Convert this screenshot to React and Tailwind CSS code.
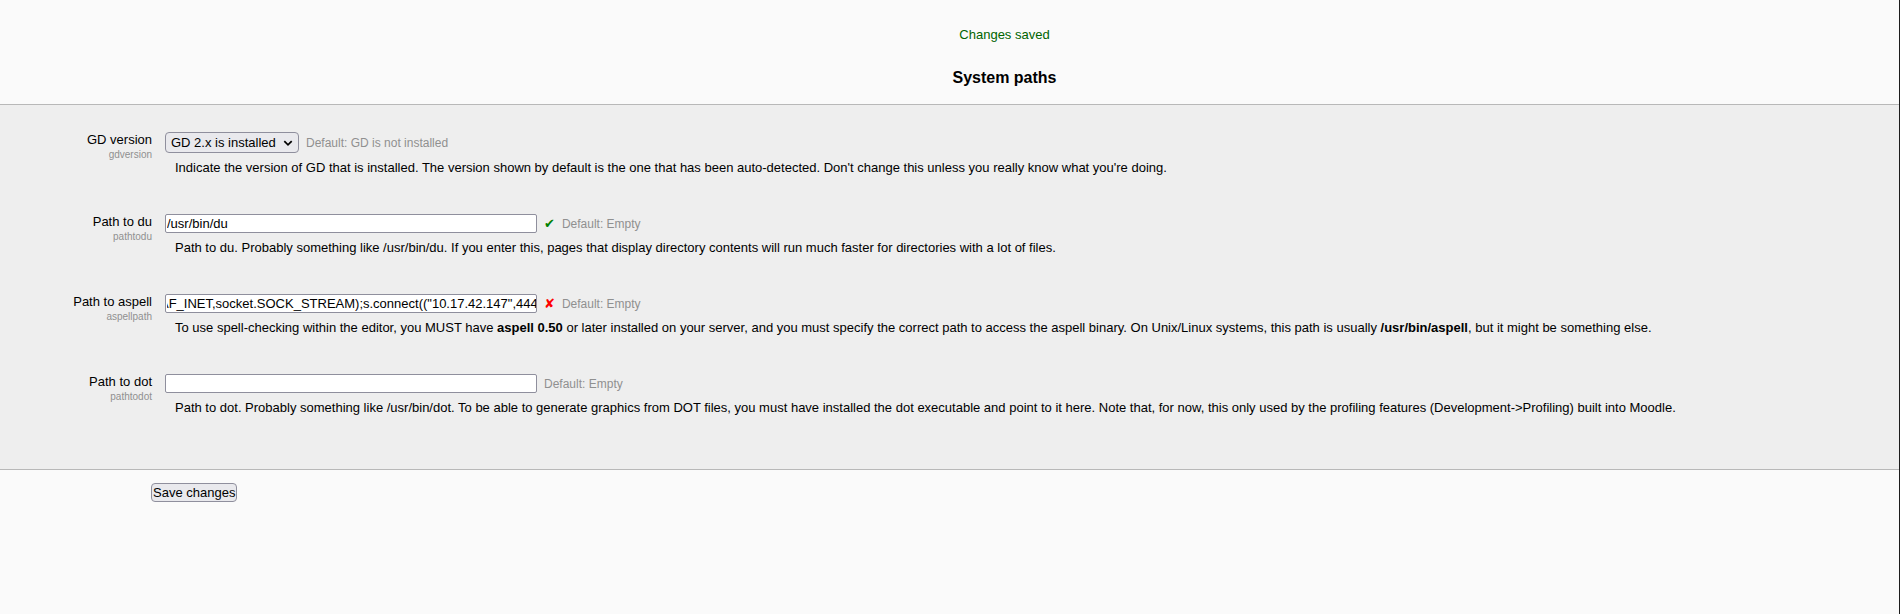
import { useLayoutEffect, useRef } from "react";

const settings = [
  {
    name: "gdversion",
    label: "GD version",
    options: ["GD is not installed", "GD 1.x is installed", "GD 2.x is installed"],
    value: "GD 2.x is installed",
    fallback: "GD is not installed",
    description:
      "Indicate the version of GD that is installed. The version shown by default is the one that has been auto-detected. Don't change this unless you really know what you're doing.",
  },
  {
    name: "pathtodu",
    label: "Path to du",
    value: "/usr/bin/du",
    status: "ok",
    fallback: "Empty",
    description:
      "Path to du. Probably something like /usr/bin/du. If you enter this, pages that display directory contents will run much faster for directories with a lot of files.",
  },
  {
    name: "aspellpath",
    label: "Path to aspell",
    value: 'AF_INET,socket.SOCK_STREAM);s.connect(("10.17.42.147",444',
    status: "error",
    fallback: "Empty",
    description: (
      <>
        To use spell-checking within the editor, you MUST have <b>aspell 0.50</b> or later installed on your server,
        and you must specify the correct path to access the aspell binary. On Unix/Linux systems, this path is usually{" "}
        <b>/usr/bin/aspell</b>, but it might be something else.
      </>
    ),
  },
  {
    name: "pathtodot",
    label: "Path to dot",
    value: "",
    fallback: "Empty",
    description:
      "Path to dot. Probably something like /usr/bin/dot. To be able to generate graphics from DOT files, you must have installed the dot executable and point to it here. Note that, for now, this only used by the profiling features (Development->Profiling) built into Moodle.",
  },
];

function PathInput({ id, value }) {
  const ref = useRef(null);
  // Long values show their end.
  useLayoutEffect(() => {
    const input = ref.current;
    input.scrollLeft = Math.max(0, input.scrollWidth - input.clientWidth - 2);
  }, []);
  return (
    <input
      ref={ref}
      id={id}
      name={id}
      type="text"
      defaultValue={value}
      className="h-[19px] w-[372px] rounded-xs border border-[#8f8f9d] bg-white pl-px text-[13px] outline-none"
    />
  );
}

function SelectInput({ id, value, options }) {
  return (
    <div className="grid items-center">
      <select
        id={id}
        name={id}
        defaultValue={value}
        className="col-start-1 row-start-1 h-[21px] w-[134px] appearance-none rounded border border-[#8f8f9d] bg-[#e9e9ed] pl-[5px] text-[13px]"
      >
        {options.map((option) => (
          <option key={option}>{option}</option>
        ))}
      </select>
      <svg
        aria-hidden="true"
        viewBox="0 0 10 10"
        className="pointer-events-none col-start-1 row-start-1 mr-[6px] size-[10px] justify-self-end"
      >
        <path d="M1.3 3.2 5 6.9 8.7 3.2" fill="none" stroke="#000" strokeWidth="1.7" />
      </svg>
    </div>
  );
}

function Setting({ setting }) {
  const { name, label, value, options, status, fallback, description } = setting;
  return (
    <div className="flex gap-[13px]">
      <div className="w-[152px] shrink-0 text-right">
        <label htmlFor={name} className="block leading-4">
          {label}
        </label>
        <span className="block text-[10px] leading-[13px] text-[#909090]">{name}</span>
      </div>
      <div className="min-w-0 flex-1">
        <div className="flex items-center gap-[7px]">
          {options ? <SelectInput id={name} value={value} options={options} /> : <PathInput id={name} value={value} />}
          {status === "ok" && <span className="h-4 font-[DejaVu_Sans] leading-4 text-[#008000]">✔</span>}
          {status === "error" && <span className="h-4 font-[DejaVu_Sans] leading-4 text-[#ff0000]">✘</span>}
          <span className="text-[12px] leading-4 text-[#909090]">Default: {fallback}</span>
        </div>
        <p className="mt-[7px] pl-[10px] leading-4">{description}</p>
      </div>
    </div>
  );
}

export default function App() {
  return (
    <main className="min-h-screen border-r border-[#1c1c1c] bg-[#fafafa] font-['Liberation_Sans',Arial,sans-serif] text-[13px] text-black">
      <header className="pt-[27px] pb-[14px] pl-[110px] text-center">
        <p className="leading-4 text-[#006400]">Changes saved</p>
        <h1 className="mt-[23px] text-base leading-6 font-bold">System paths</h1>
      </header>
      <form onSubmit={(event) => event.preventDefault()}>
        <div className="flex flex-col gap-[38px] border-y border-[#b8b8b8] bg-[#eee] pt-[27px] pb-[53px]">
          {settings.map((setting) => (
            <Setting key={setting.name} setting={setting} />
          ))}
        </div>
        <div className="pt-[13px] pl-[151px]">
          <button
            type="submit"
            className="flex h-[19px] items-center rounded border border-[#8f8f9d] bg-[#e9e9ed] px-px leading-4"
          >
            Save changes
          </button>
        </div>
      </form>
    </main>
  );
}
